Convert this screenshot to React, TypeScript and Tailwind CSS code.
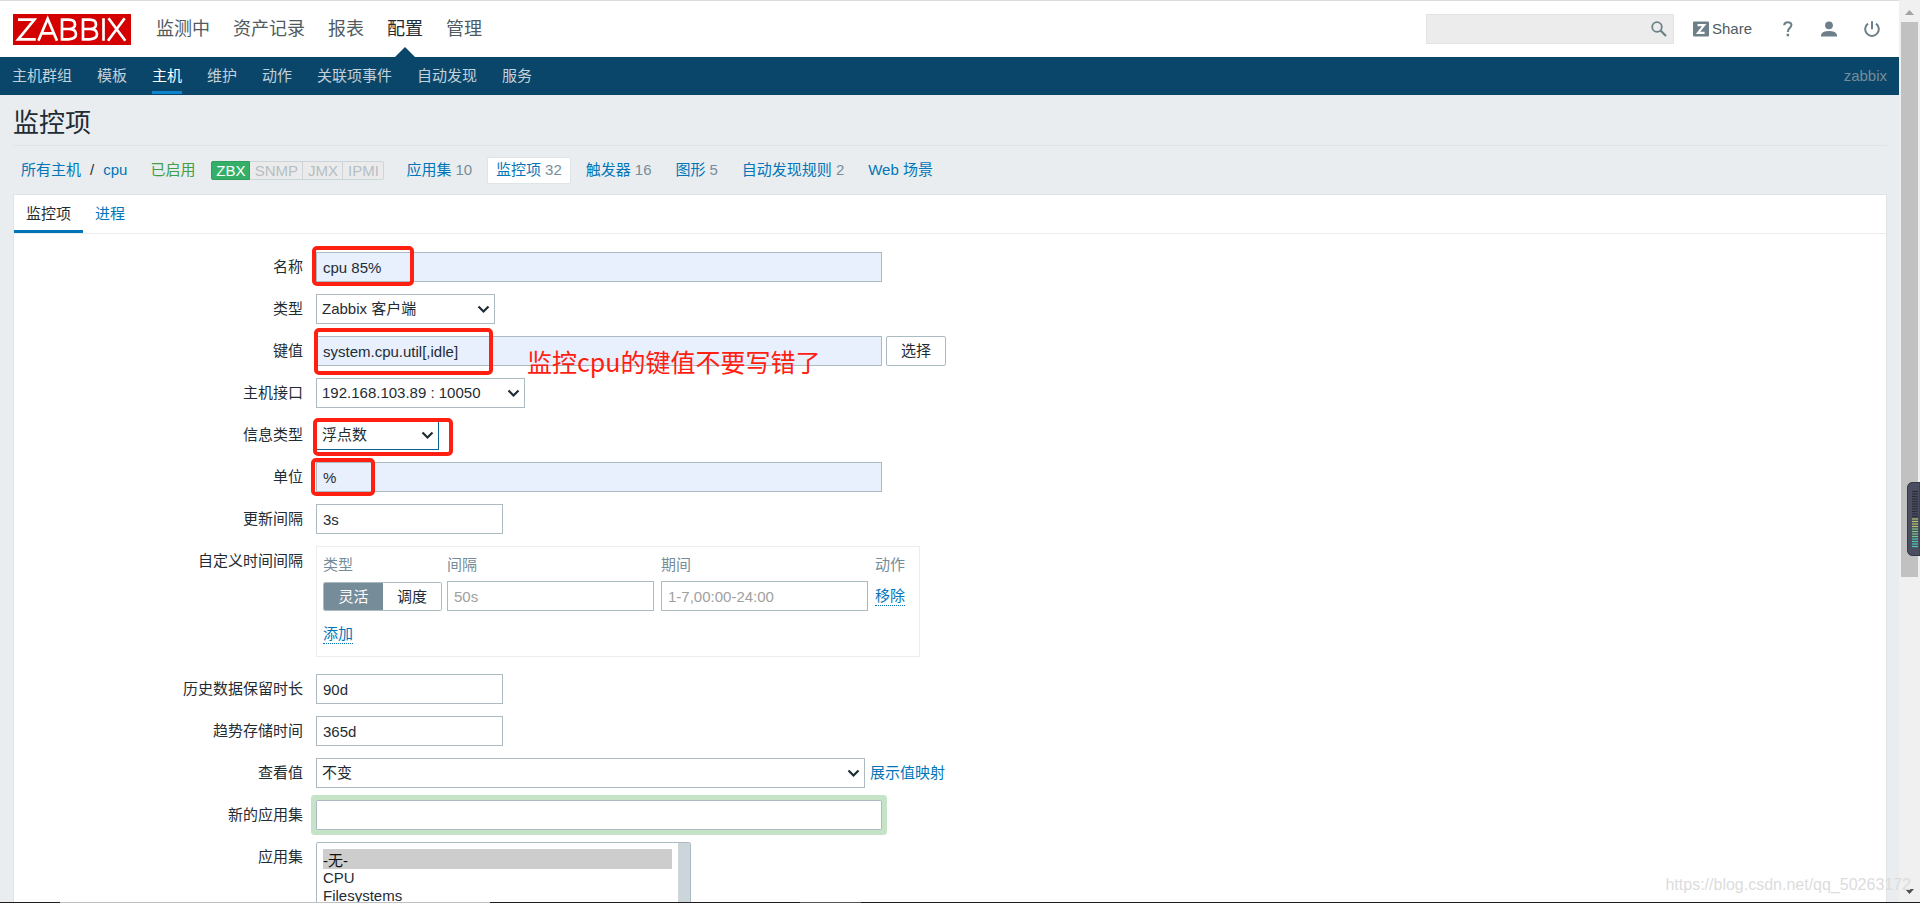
import React from "react";

const mainMenu = ["监测中", "资产记录", "报表", "配置", "管理"];
const subMenu = ["主机群组", "模板", "主机", "维护", "动作", "关联项事件", "自动发现", "服务"];

const hostLinks = [
  { label: "应用集", count: "10" },
  { label: "监控项", count: "32" },
  { label: "触发器", count: "16" },
  { label: "图形", count: "5" },
  { label: "自动发现规则", count: "2" },
  { label: "Web 场景", count: "" },
];

const inputBase = "h-[30px] border border-[#acbbc2] px-[6px] text-[15px] text-[#1f2c33] outline-none placeholder:text-[#a0a0a0]";

function Row({ id, label, children }: { id: string; label: string; children: React.ReactNode }) {
  return (
    <div className="mb-3 flex items-start">
      <label htmlFor={id} className="w-[302px] shrink-0 pr-[13px] text-right leading-[30px]">
        {label}
      </label>
      <div className="relative flex items-center">{children}</div>
    </div>
  );
}

function Select({ id, value, className }: { id: string; value: string; className: string }) {
  return (
    <div className={`relative ${className}`}>
      <select
        id={id}
        className="h-[30px] w-full appearance-none border border-inherit bg-white px-[5px] text-[15px] text-[#1f2c33] outline-none"
      >
        <option>{value}</option>
      </select>
      <svg className="pointer-events-none absolute top-[11px] right-[5px] h-[9px] w-[13px]" viewBox="0 0 13 9" fill="none">
        <path d="M1.5 1.5 6.5 6.5 11.5 1.5" stroke="#1f2c33" strokeWidth="2.2" />
      </svg>
    </div>
  );
}

function Mark({ className }: { className: string }) {
  return <span className={`pointer-events-none absolute rounded-[5px] border-4 border-[#ff2012] ${className}`} />;
}

function Header() {
  return (
    <header>
      <div className="flex h-[57px] items-center border-t border-[#dadce0] bg-white pr-[19px] pl-[13px]">
        <a href="#home" aria-label="ZABBIX" className="h-[31px] w-[118px]">
          <svg viewBox="0 0 118 31" className="h-[31px] w-[118px]">
            <rect width="118" height="31" fill="#d40000" />
            <g fill="none" stroke="#fff" strokeWidth="2.7">
              <path d="M5 5.7H21.4L5.2 25.3H22.8" />
              <path d="M25.4 26.7 34.7 4.8 44 26.7M28.6 19.3H40.8" />
              <path d="M49 5.7V25.3M47.7 5.7H55.4Q62 5.7 62 10.4T55.4 15H49M55.4 15Q63 15 63 20.1T55.4 25.3H47.7" />
              <path d="M70 5.7V25.3M68.7 5.7H76.4Q83 5.7 83 10.4T76.4 15H70M76.4 15Q84 15 84 20.1T76.4 25.3H68.7" />
              <path d="M90.5 4.3V26.7M95.5 4.3 112.3 26.7M111.7 4.3 95 26.7" />
            </g>
          </svg>
        </a>
        <nav className="ml-[25px] flex h-full gap-[23px] text-lg text-[#4f5b61]">
          {mainMenu.map((item) => (
            <a
              key={item}
              href="#menu"
              className={`relative flex items-center ${item === "配置" ? "text-[#1f2c33]" : ""}`}
            >
              {item}
              {item === "配置" && (
                <svg className="absolute bottom-0 left-[8px] h-[10px] w-[20px]" viewBox="0 0 20 10">
                  <path d="M0 10 10 0 20 10z" fill="#0a466a" />
                </svg>
              )}
            </a>
          ))}
        </nav>
        <div className="ml-auto flex items-center">
          <div className="relative">
            <input aria-label="搜索" className="h-[30px] w-[248px] border border-[#dfe4e7] bg-[#ececec] pr-7 pl-2 outline-none" />
            <button aria-label="搜索按钮" className="absolute top-[7px] right-[7px]">
              <svg className="h-4 w-4" viewBox="0 0 16 16" fill="none" stroke="#6d8089">
                <circle cx="6" cy="6" r="4.8" strokeWidth="1.8" />
                <path d="M9.5 9.5 15 15" strokeWidth="2.3" />
              </svg>
            </button>
          </div>
          <a href="#share" className="ml-[19px] flex items-center gap-[3px] text-[#4f5b61]">
            <svg className="h-4 w-4" viewBox="0 0 16 16">
              <rect y="0.5" width="16" height="15" rx="1" fill="#6d8089" />
              <path d="M4.5 4.1H11.2L5 11.9H11.6" fill="none" stroke="#fff" strokeWidth="2.1" />
            </svg>
            Share
          </a>
          <a href="#help" aria-label="帮助" className="ml-[31px]">
            <svg className="h-4 w-[10px]" viewBox="0 0 10 16">
              <path d="M1.2 4.3C1.4 .3 8.4 .2 8.4 4 8.4 6.8 4.8 6.8 4.8 11" fill="none" stroke="#6d8089" strokeWidth="2.1" />
              <path d="M3.6 12.8h2.5v2.5H3.6z" fill="#6d8089" />
            </svg>
          </a>
          <a href="#profile" aria-label="用户" className="ml-[28px]">
            <svg className="h-4 w-4" viewBox="0 0 16 16" fill="#6d8089">
              <circle cx="8" cy="4.3" r="3.9" />
              <path d="M0 15.6V13.8C1 11 4 10 8 10s7 1 8 3.8v1.8z" />
            </svg>
          </a>
          <a href="#logout" aria-label="退出" className="ml-[27px]">
            <svg className="h-4 w-4" viewBox="0 0 16 16" fill="none" stroke="#6d8089" strokeWidth="2">
              <path d="M4 2.6A6.8 6.8 0 1 0 12 2.6M8 0.3V8.3" />
            </svg>
          </a>
        </div>
      </div>
      <div className="flex h-[38px] items-stretch bg-[#0a466a] px-3 text-[#c3d1da]">
        <nav className="flex gap-[25px]">
          {subMenu.map((item) => (
            <a
              key={item}
              href="#sub"
              className={`mb-px flex items-center border-y-[3px] border-t-transparent ${
                item === "主机" ? "border-b-[#0f84cc] text-white" : "border-b-transparent"
              }`}
            >
              {item}
            </a>
          ))}
        </nav>
        <span className="ml-auto self-center text-[#768d99]">zabbix</span>
      </div>
    </header>
  );
}

function HostBar() {
  return (
    <div className="flex h-[48px] items-center pl-2 text-[#0275b8]">
      <a href="#hosts">所有主机</a>
      <span className="mx-[9px] text-[#1f2c33]">/</span>
      <a href="#cpu">cpu</a>
      <span className="ml-[23px] text-[#429e47]">已启用</span>
      <div className="ml-4 flex h-[19px] text-center leading-[17px] text-[#b4bfc5]">
        <span className="w-[39px] rounded-l-xs border border-[#2f9f5e] bg-[#34af67] text-white">ZBX</span>
        <span className="w-[53px] border border-l-0 border-[#ccd5d9] bg-[#ebebeb]">SNMP</span>
        <span className="w-10 border border-l-0 border-[#ccd5d9] bg-[#ebebeb]">JMX</span>
        <span className="w-[41px] rounded-r-xs border border-l-0 border-[#ccd5d9] bg-[#ebebeb]">IPMI</span>
      </div>
      <nav className="ml-[13px] flex gap-[6px]">
        {hostLinks.map(({ label, count }) => (
          <a
            key={label}
            href="#section"
            className={`flex h-[27px] items-center gap-1 rounded-xs border px-2 ${
              label === "监控项" ? "border-[#dfe4e7] bg-white" : "border-transparent"
            }`}
          >
            {label}
            {count && <span className="text-[#768d99]">{count}</span>}
          </a>
        ))}
      </nav>
    </div>
  );
}

function Intervals() {
  return (
    <div className="mb-[17px] flex items-start">
      <span className="w-[302px] shrink-0 pr-[13px] text-right leading-[30px]">自定义时间间隔</span>
      <div className="h-[111px] w-[604px] border border-[#ebedef] px-[6px] pt-[5px]">
        <table className="border-collapse text-left">
          <thead>
            <tr className="h-[29px] text-[#768d99]">
              <th className="pb-[3px] font-normal">类型</th>
              <th className="pb-[3px] font-normal">间隔</th>
              <th className="pb-[3px] font-normal">期间</th>
              <th className="pb-[3px] font-normal">动作</th>
            </tr>
          </thead>
          <tbody>
            <tr>
              <td className="pr-[5px]">
                <div className="flex h-[29px] w-[119px] overflow-hidden rounded-xs border border-[#acbbc2] leading-[27px]">
                  <button className="w-[59px] bg-[#768d99] text-white">灵活</button>
                  <button className="flex-1 bg-white">调度</button>
                </div>
              </td>
              <td className="pr-[7px]">
                <input aria-label="间隔" placeholder="50s" className={`${inputBase} block w-[207px]`} />
              </td>
              <td className="pr-[7px]">
                <input aria-label="期间" placeholder="1-7,00:00-24:00" className={`${inputBase} block w-[207px]`} />
              </td>
              <td>
                <button className="border-b border-dotted border-[#0275b8] leading-[19px] text-[#0275b8]">移除</button>
              </td>
            </tr>
          </tbody>
        </table>
        <button className="mt-[13px] block border-b border-dotted border-[#0275b8] leading-[19px] text-[#0275b8]">添加</button>
      </div>
    </div>
  );
}

function ItemForm() {
  return (
    <form className="pt-[18px]" onSubmit={(e) => e.preventDefault()}>
      <Row id="name" label="名称">
        <input id="name" defaultValue="cpu 85%" className={`${inputBase} w-[566px] bg-[#e8f0fe]`} />
        <Mark className="-top-[6px] -left-[4px] h-[40px] w-[102px]" />
      </Row>
      <Row id="type" label="类型">
        <Select id="type" value="Zabbix 客户端" className="w-[179px] border-[#acbbc2]" />
      </Row>
      <Row id="key" label="键值">
        <input id="key" defaultValue="system.cpu.util[,idle]" className={`${inputBase} w-[566px] bg-[#e8f0fe]`} />
        <button className="ml-1 h-[30px] w-[60px] rounded-xs border border-[#acbbc2] bg-white">选择</button>
        <Mark className="-top-[8px] -left-[2px] h-[47px] w-[179px]" />
        <span className="pointer-events-none absolute top-[9px] left-[211px] text-[25px] leading-[32px] whitespace-nowrap text-[#ff2012] font-['Noto_Sans_CJK_SC',sans-serif]">
          监控cpu的键值不要写错了
        </span>
      </Row>
      <Row id="interface" label="主机接口">
        <Select id="interface" value="192.168.103.89 : 10050" className="w-[209px] border-[#acbbc2]" />
      </Row>
      <Row id="value-type" label="信息类型">
        <Select id="value-type" value="浮点数" className="w-[123px] border-[#0a6396]" />
        <Mark className="-top-[2px] -left-[3px] h-[38px] w-[140px]" />
      </Row>
      <Row id="units" label="单位">
        <input id="units" defaultValue="%" className={`${inputBase} w-[566px] bg-[#e8f0fe]`} />
        <Mark className="-top-[4px] -left-[5px] h-[38px] w-[64px]" />
      </Row>
      <Row id="delay" label="更新间隔">
        <input id="delay" defaultValue="3s" className={`${inputBase} w-[187px]`} />
      </Row>
      <Intervals />
      <Row id="history" label="历史数据保留时长">
        <input id="history" defaultValue="90d" className={`${inputBase} w-[187px]`} />
      </Row>
      <Row id="trends" label="趋势存储时间">
        <input id="trends" defaultValue="365d" className={`${inputBase} w-[187px]`} />
      </Row>
      <Row id="valuemap" label="查看值">
        <Select id="valuemap" value="不变" className="w-[549px] border-[#acbbc2]" />
        <a href="#valuemaps" className="ml-[5px] text-[#0275b8]">展示值映射</a>
      </Row>
      <Row id="new-app" label="新的应用集">
        <input id="new-app" className={`${inputBase} w-[566px] rounded-[1px] shadow-[0_0_0_5px_#c5e4c7]`} />
      </Row>
      <Row id="apps" label="应用集">
        <div className="flex h-[130px] w-[375px] rounded-xs border border-[#acbbc2]">
          <select
            id="apps"
            size={6}
            defaultValue="-无-"
            className="h-full min-w-0 flex-1 appearance-none overflow-hidden px-[6px] py-[6px] text-[15px] text-[#1f2c33] outline-none"
          >
            <option className="h-[20px] bg-[#cdcdcd] p-0 leading-[20px]">-无-</option>
            <option className="h-[18px] p-0 leading-[18px]">CPU</option>
            <option className="h-[18px] p-0 leading-[18px]">Filesystems</option>
          </select>
          <span className="w-[12px] bg-[#ccd5d9]" />
        </div>
      </Row>
    </form>
  );
}

function PageScrollbar() {
  const bars = Array.from({ length: 23 }, (_, i) => i);
  return (
    <aside className="relative flex w-[21px] shrink-0 flex-col items-center bg-[#f0f0f0]">
      <svg className="mt-[10px] h-[5px] w-[9px]" viewBox="0 0 9 5">
        <path d="M0 5 4.5 0 9 5z" fill="#a3a3a3" />
      </svg>
      <div className="mt-[7px] h-[555px] w-[17px] bg-[#c1c1c1]" />
      <svg className="mt-auto mb-[9px] h-[5px] w-[9px]" viewBox="0 0 9 5">
        <path d="M0 0 4.5 5 9 0z" fill="#505050" />
      </svg>
      <svg className="absolute top-[482px] right-0 h-[74px] w-[13px]" viewBox="0 0 13 74">
        <path d="M13 0.5H5Q0.5 1 0.5 6V68Q0.5 73 5 73.5H13z" fill="#4a4e60" stroke="#343744" />
        {bars.map((i) => (
          <path
            key={i}
            d={`M5 ${9.5 + i * 2.5}H11`}
            stroke={i < 11 ? "#2b2d3a" : i < 15 ? "#b4c763" : i < 19 ? "#7cc983" : "#4fc9b0"}
            strokeWidth="1.2"
          />
        ))}
      </svg>
    </aside>
  );
}

export default function App() {
  return (
    <div className="relative flex h-screen overflow-hidden bg-[#e9edf0] font-['Liberation_Sans','Noto_Sans_CJK_SC',sans-serif] text-[15px] leading-5 text-[#1f2c33]">
      <div className="min-w-0 flex-1">
        <Header />
        <main className="pr-3 pl-[13px]">
          <h1 className="flex h-[51px] items-center border-b border-[#dfe4e7] pt-1.5 text-[26px] leading-8">监控项</h1>
          <HostBar />
          <section className="border border-[#dfe4e7] bg-white">
            <div className="flex h-[39px] border-b border-[#ebedef]" role="tablist">
              <button role="tab" className="border-b-[3px] border-[#0275b8] px-3 pt-0.5">监控项</button>
              <button role="tab" className="border-b-[3px] border-transparent px-3 pt-0.5 text-[#0275b8]">进程</button>
            </div>
            <ItemForm />
          </section>
        </main>
      </div>
      <PageScrollbar />
      <span className="pointer-events-none absolute right-[9px] bottom-[8px] text-[16px] text-[#dcdcdc]">
        https://blog.csdn.net/qq_50263172
      </span>
      <div className="absolute inset-x-0 bottom-0 flex h-px bg-[#1c1c1c]">
        <span className="ml-[60px] w-[430px] bg-[#c0c0c0]" />
        <span className="ml-[310px] w-[61px] bg-[#555555]" />
      </div>
    </div>
  );
}
